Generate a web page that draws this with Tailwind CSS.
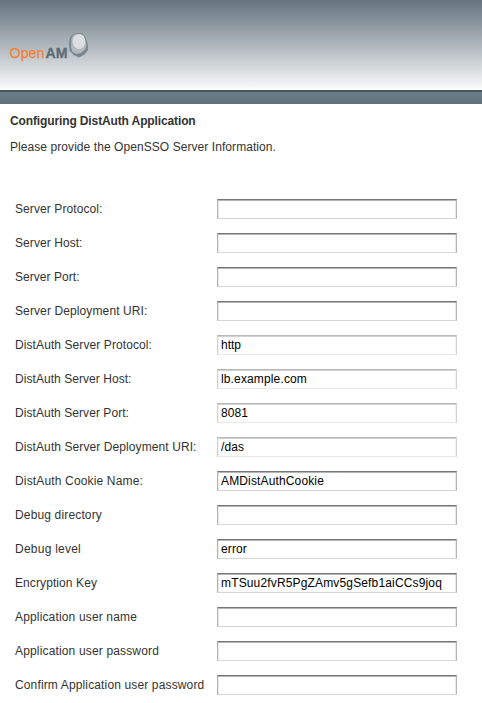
<!DOCTYPE html>
<html lang="en">
<head>
<meta charset="utf-8">
<title>Configuring DistAuth Application</title>
<script src="https://cdn.jsdelivr.net/npm/@tailwindcss/browser@4"></script>
</head>
<body class="h-[703px] overflow-hidden bg-white font-['Liberation_Sans',Arial,sans-serif] text-[12px] leading-[14px] text-[#333]">
<header>
  <div class="h-[90px] bg-linear-to-b from-[#65747f] to-[#fcfdfc] pt-[28px] pl-[8px]">
    <svg width="84" height="36" viewBox="8 28 84 36" role="img" aria-label="OpenAM">
      <text x="9.5" y="58" font-size="15.5" textLength="35" lengthAdjust="spacingAndGlyphs" fill="#f58138" stroke="#f58138" stroke-width=".25">Open</text>
      <text x="45.5" y="58" font-size="15.5" font-weight="bold" textLength="22" lengthAdjust="spacingAndGlyphs" fill="#5d6b75" stroke="#5d6b75" stroke-width=".3">AM</text>
      <path d="M73 34.500L77 33L82.500 33.500L85.500 37L88 45V50L84.500 54.500L79 57.500L73.500 55L69.500 50.500L69 43L70 37.500Z" fill="#798790"/>
      <path d="M74 34.800L79 34L83.500 35.500L86.500 44.500L85.500 49L81 53L76.500 54L72.500 52L71 47L71.500 38Z" fill="#b3b9bd"/>
      <ellipse cx="79" cy="41.500" rx="6.300" ry="7.500" fill="#dcdedf"/>
    </svg>
  </div>
  <div class="h-[14px] border-t-2 border-[#475861] bg-linear-to-b from-[#6b7c88] to-[#60707a]"></div>
</header>
<main>
  <h1 class="mt-[10px] ml-[10px] font-bold"><span data-w="186">Configuring DistAuth Application</span></h1>
  <p class="mt-[12px] ml-[10px]"><span data-w="266">Please provide the OpenSSO Server Information.</span></p>
  <form id="form" class="mt-[38px] ml-[15px]"></form>
</main>
<script>
const rows = [
  ["Server Protocol:", 87.5], ["Server Host:", 67.5], ["Server Port:", 64.5],
  ["Server Deployment URI:", 132.5], ["DistAuth Server Protocol:", 137, "http", 20],
  ["DistAuth Server Host:", 116.5, "lb.example.com", 86], ["DistAuth Server Port:", 114, "8081", 27],
  ["DistAuth Server Deployment URI:", 181.5, "/das", 23], ["DistAuth Cookie Name:", 128, "AMDistAuthCookie", 103],
  ["Debug directory", 87], ["Debug level", 66, "error", 26],
  ["Encryption Key", 82, "mTSuu2fvR5PgZAmv5gSefb1aiCCs9joq", 221],
  ["Application user name", 122], ["Application user password", 144], ["Confirm Application user password", 190]
];
const form = document.getElementById("form");
rows.forEach(([label, w, value, vw], i) => {
  const light = i >= 4 && i <= 7;
  const tone = light
    ? "border-t-[#b9b9b9] border-x-[#d2d2d2] border-b-[#e8e8e8] shadow-[inset_0_1px_0_#d0d0d0,inset_1px_0_0_#f3f3f3,inset_-1px_0_0_#f3f3f3]"
    : "border-t-[#777] border-x-[#b5b5b5] border-b-[#d7d7d7] shadow-[inset_0_1px_0_#b5b5b5,inset_1px_0_0_#e9e9e9,inset_-1px_0_0_#e9e9e9]";
  form.insertAdjacentHTML("beforeend",
    `<div class="flex h-[34px] items-center whitespace-nowrap">
      <label class="w-[202px]"><span data-w="${w}">${label}</span></label>
      <div class="h-[20px] w-[240px] border pl-[3px] pt-[2px] text-black ${tone}">${value ? `<span data-w="${vw}">${value}</span>` : ""}</div>
    </div>`);
});
// Fit each run of text to its nominal width through letter spacing.
const pen = document.createElement("canvas").getContext("2d");
document.querySelectorAll("[data-w]").forEach(s => {
  pen.font = (s.parentNode.tagName === "H1" ? "bold " : "") + "12px 'Liberation Sans', Arial, sans-serif";
  s.style.letterSpacing = (s.dataset.w - pen.measureText(s.textContent).width) / s.textContent.length + "px";
});
</script>
</body>
</html>
